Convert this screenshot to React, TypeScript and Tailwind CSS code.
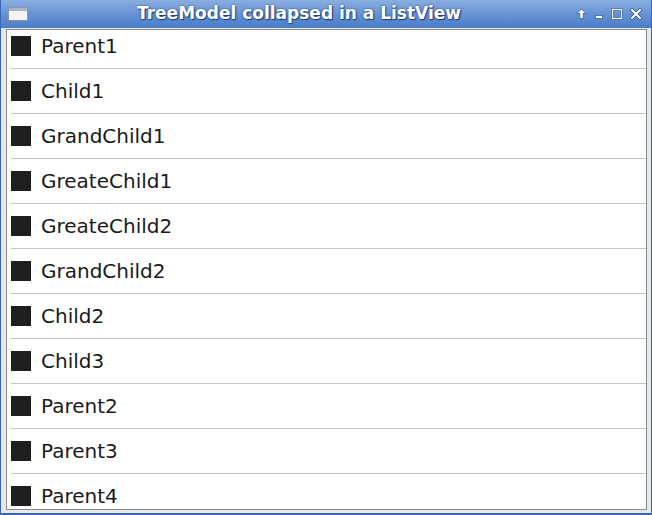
const items = [
  "Parent1",
  "Child1",
  "GrandChild1",
  "GreateChild1",
  "GreateChild2",
  "GrandChild2",
  "Child2",
  "Child3",
  "Parent2",
  "Parent3",
  "Parent4",
]

function TitleBar() {
  return (
    <div className="relative flex h-[28px] items-center bg-gradient-to-b from-[#8aaee0] via-[#6792d4] to-[#4a7cc8] px-[7px]">
      <div className="flex h-[14px] w-[20px] flex-col border border-[#8a96a8] bg-[#f4f4f4]">
        <div className="h-[3px] bg-[#aab6c8]" />
      </div>
      <div
        className="flex-1 pr-[6px] text-center text-[17px] font-bold text-white"
        style={{ textShadow: "0 0 2px #1c3d78, 1px 1px 1px #1c3d78" }}
      >
        TreeModel collapsed in a ListView
      </div>
      <div className="flex items-center gap-[7px] pr-[2px]">
        <svg width="11" height="12" viewBox="0 0 11 12">
          <path d="M5.5 1 L10 5.5 L7.2 5.5 L7.2 10.5 L3.8 10.5 L3.8 5.5 L1 5.5 Z" fill="white" stroke="#2b4f8f" strokeWidth="0.7" />
        </svg>
        <svg width="10" height="12" viewBox="0 0 10 12">
          <rect x="1.5" y="7.5" width="7" height="3" fill="white" stroke="#2b4f8f" strokeWidth="0.7" />
        </svg>
        <svg width="12" height="12" viewBox="0 0 12 12">
          <rect x="1.5" y="1.5" width="9" height="9" fill="none" stroke="#2b4f8f" strokeWidth="2.2" />
          <rect x="1.5" y="1.5" width="9" height="9" fill="none" stroke="white" strokeWidth="1.2" />
        </svg>
        <svg width="12" height="12" viewBox="0 0 12 12">
          <path d="M2 2 L10 10 M10 2 L2 10" stroke="#2b4f8f" strokeWidth="3.4" strokeLinecap="square" />
          <path d="M2 2 L10 10 M10 2 L2 10" stroke="white" strokeWidth="2" strokeLinecap="square" />
        </svg>
      </div>
    </div>
  )
}

export default function App() {
  return (
    <div
      className="flex h-[515px] w-[652px] flex-col border-x border-b-2 border-x-[#3a68b6] border-b-[#3a68b6] bg-[#e8e8e8]"
      style={{ fontFamily: '"DejaVu Sans", sans-serif' }}
    >
      <TitleBar />
      <div className="flex flex-1 flex-col overflow-hidden pl-[5px] pr-[4px] pb-[3px] pt-[1px]">
        <div className="flex-1 overflow-hidden border border-[#8a8a8a] bg-white">
          <div className="-mt-[6px]">
            {items.map((name) => (
              <div key={name} className="ml-[4px] flex h-[45px] items-center gap-[10px] border-b border-[#c4c4c4]">
                <div className="h-[20px] w-[20px] shrink-0 bg-[#1e1e1e]" />
                <span className="text-[20px] leading-none text-[#1a1a1a]">{name}</span>
              </div>
            ))}
          </div>
        </div>
      </div>
    </div>
  )
}
